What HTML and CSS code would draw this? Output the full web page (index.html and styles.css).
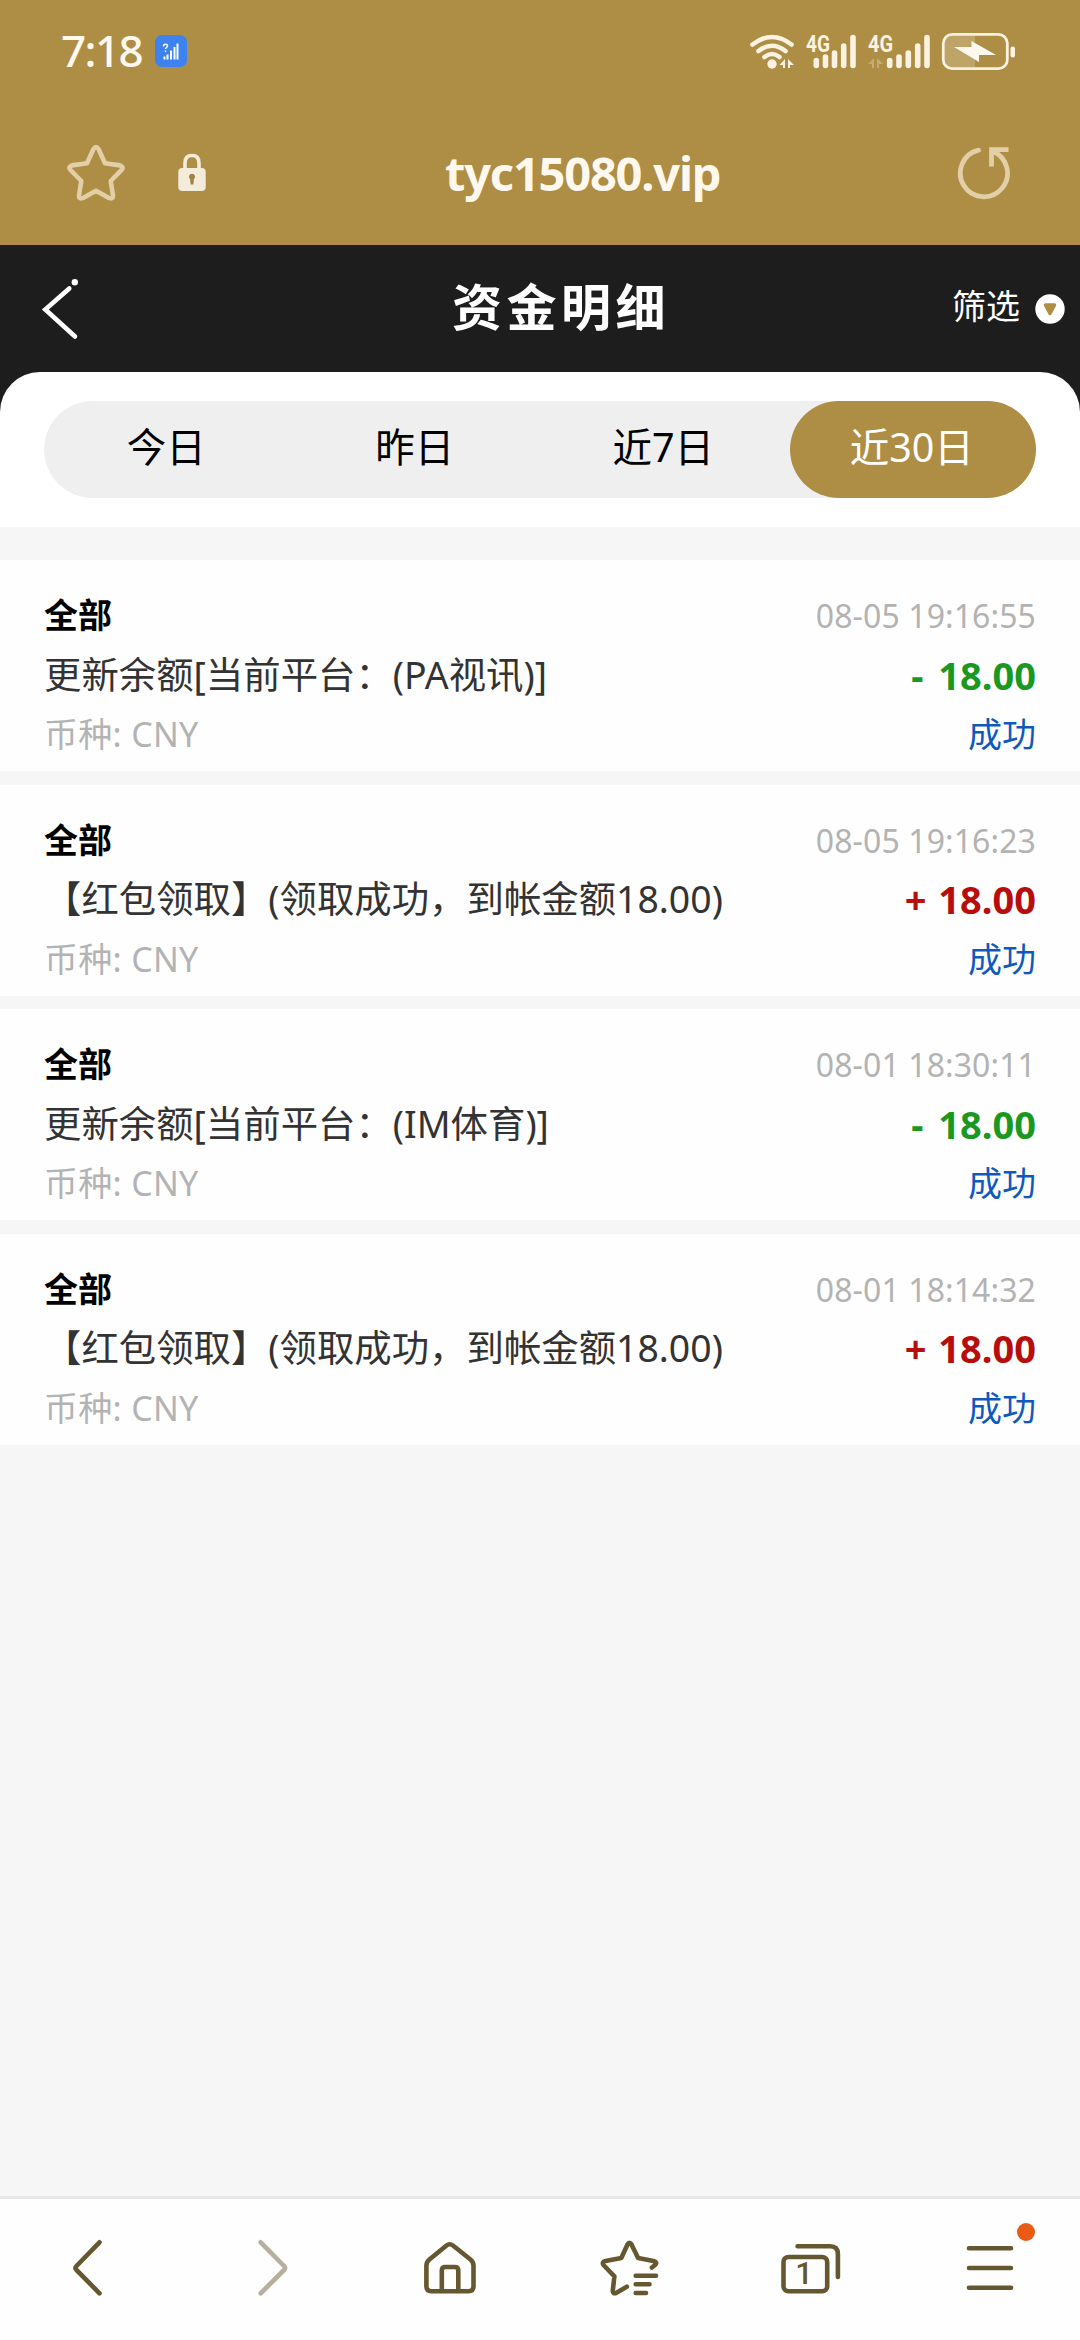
FILE: index.html
```
<!DOCTYPE html>
<html lang="zh-CN">
  <head>
    <meta charset="UTF-8" />
    <meta name="viewport" content="width=device-width, initial-scale=1.0" />
    <title>资金明细</title>
    <link rel="stylesheet" href="styles.css">
  </head>
  <body>
    <header class="browser-top">
      <div class="status-bar">
        <span class="clock">7:18</span>
        <svg class="sim-badge" width="32" height="32" viewBox="0 0 32 32">
          <rect width="32" height="32" rx="7" fill="#3d82ee" />
          <path d="M9.5 24.500v-3M12.500 24.500v-5M16 24.500v-9M19.500 24.500V12M22.500 24.500V8.500" stroke="#fff" stroke-width="2" />
          <path d="M8.500 11.500c0-3 4-3 4-.5 0 1.500-2 1.500-2 3M10.500 15.500v1.500" fill="none" stroke="#fff" stroke-width="1.400" />
        </svg>
        <svg class="status-icons" width="270" height="60" viewBox="748 20 270 60">
          <g fill="none" stroke="#fbf2e2" stroke-width="4.600" stroke-linecap="round">
            <path d="M752.500 43.500q19.500-15 39 0M758.500 50q13.500-10.500 27 0M764.500 56q7.500-6 15 0" />
            <path stroke-width="5.600" d="M816.300 64.500v-5M825.500 64.500v-8.500M834.500 64.500V52M843.700 64.500V45M853 64.500V36.500" />
            <path stroke-width="5.600" d="M889.700 64.500v-5M899 64.500v-8.500M908.300 64.500V52M917.700 64.500V45M927 64.500V36.500" />
          </g>
          <circle cx="772" cy="63" r="4.700" fill="#fbf2e2" />
          <path d="M785 58v9h-2v-3h-3.500zM788 58v9h2v-3h4z" fill="#fbf2e2" />
          <path d="M874 57v10h-2v-4h-4zM877 57v10h2v-4h4z" fill="#fbf2e2" opacity=".3" />
          <text class="net" x="806" y="50.500" textLength="24" lengthAdjust="spacingAndGlyphs">4G</text>
          <text class="net" x="868" y="50.500" textLength="25" lengthAdjust="spacingAndGlyphs">4G</text>
          <path d="M975 34.500h-22q-8 0-8 8v16q0 8 8 8h22z" fill="#bfa468" />
          <rect x="943.300" y="33.300" width="64" height="34.400" rx="9" fill="none" stroke="#fbf2e2" stroke-width="2.800" />
          <path d="M954 46h17.500v-6L996 54h-17v7z" fill="#fff8ef" />
          <rect x="1010.500" y="45.500" width="4.500" height="11" rx="2" fill="#fbf2e2" />
        </svg>
      </div>
      <div class="url-bar">
        <svg width="62" height="62" viewBox="65 142 62 62">
          <path d="M93.500 149Q96 145 98.500 149L105 163.300 120 165.400Q124.500 167 121.500 170L110.700 181 113 195.500Q113 200 108.500 197.700L96 190.800 83.500 197.700Q79 200 79 195.500L81.300 181 70.500 170Q67.500 167 72 165.400L87 163.300Z" fill="none" stroke="#e2cfa8" stroke-width="4.600" stroke-linejoin="round" />
        </svg>
        <svg class="lock" width="30" height="40" viewBox="177 154 30 40">
          <rect x="178.300" y="169" width="27.400" height="23" rx="4" fill="#f3ecda" />
          <path d="M185 170v-6q0-7.500 7-7.500t7 7.500v6" fill="none" stroke="#f3ecda" stroke-width="3.600" />
          <path d="M192 174.800a3 3 0 0 1 2 5.300l-.7 5.400h-2.600l-.7-5.400a3 3 0 0 1 2-5.300z" fill="#a08345" />
        </svg>
        <span class="url">tyc15080.vip</span>
        <svg class="reload" width="56" height="56" viewBox="956 145 56 56">
          <g fill="none" stroke="#e2cfa8" stroke-width="4.800">
            <path d="M978.500 150.200A23.600 23.600 0 1 0 992.500 151.200" stroke-linecap="round" />
            <path d="M1008.500 149.700H991.500V166.500" />
          </g>
        </svg>
      </div>
    </header>

    <div class="page-header">
      <svg class="back" width="40" height="64" viewBox="40 277 40 64">
        <path d="M69.300 288.500L45.300 309.500L75 336.500" fill="none" stroke="#fff" stroke-width="4.600" stroke-linecap="round" />
        <circle cx="74.800" cy="282.300" r="3.200" fill="#fff" />
      </svg>
      <h1>资金明细</h1>
      <div class="filter">
        <span>筛选</span>
        <svg width="30" height="30" viewBox="0 0 30 30">
          <circle cx="15" cy="15" r="14.700" fill="#fff" />
          <path d="M10.500 11h9L15 19.500z" fill="#ae8e44" stroke="#ae8e44" stroke-width="3.500" stroke-linejoin="round" />
        </svg>
      </div>
    </div>

    <div class="tabs-wrap">
      <div class="tabs-panel">
        <div class="tabs">
          <div class="tab">今日</div>
          <div class="tab">昨日</div>
          <div class="tab">近7日</div>
          <div class="tab active">近30日</div>
        </div>
      </div>
    </div>

    <main class="record-list">
      <div class="record">
        <div class="line"><strong>全部</strong><time>08-05 19:16:55</time></div>
        <div class="line"><span class="desc">更新余额[当前平台：(PA视讯)]</span><span class="amount minus">- 18.00</span></div>
        <div class="line"><span class="currency">币种: CNY</span><span class="state">成功</span></div>
      </div>
      <div class="record">
        <div class="line"><strong>全部</strong><time>08-05 19:16:23</time></div>
        <div class="line"><span class="desc">【红包领取】(领取成功，到帐金额18.00)</span><span class="amount plus">+ 18.00</span></div>
        <div class="line"><span class="currency">币种: CNY</span><span class="state">成功</span></div>
      </div>
      <div class="record">
        <div class="line"><strong>全部</strong><time>08-01 18:30:11</time></div>
        <div class="line"><span class="desc">更新余额[当前平台：(IM体育)]</span><span class="amount minus">- 18.00</span></div>
        <div class="line"><span class="currency">币种: CNY</span><span class="state">成功</span></div>
      </div>
      <div class="record">
        <div class="line"><strong>全部</strong><time>08-01 18:14:32</time></div>
        <div class="line"><span class="desc">【红包领取】(领取成功，到帐金额18.00)</span><span class="amount plus">+ 18.00</span></div>
        <div class="line"><span class="currency">币种: CNY</span><span class="state">成功</span></div>
      </div>
    </main>

    <nav class="bottom-nav">
      <svg viewBox="0 0 180 141"><path d="M99.500 43.300L76.500 67Q74.500 69 76.500 71L99.500 94.300" /></svg>
      <svg class="disabled" viewBox="0 0 180 141"><path d="M80.700 43.300L104 67Q106 69 104 71L80.700 94.300" /></svg>
      <svg viewBox="0 0 180 141">
        <path d="M86.500 46.500Q89.700 44 93 46.500L110.500 60.500Q113.500 63 113.500 66.500V87.300Q113.500 92.300 108.500 92.300H71.400Q66.400 92.300 66.400 87.300V66.500Q66.400 63 69.400 60.500Z" />
        <path d="M81.800 92V71.500Q81.800 68 85.300 68H94.800Q98.300 68 98.300 71.500V92" />
      </svg>
      <svg viewBox="0 0 180 141">
        <path d="M86.800 87.700L76.500 93.800Q72.500 95.500 72.800 91.500L74.400 77.300 63.500 66Q61.500 63 65.500 62L81.300 59 87.500 45.500Q89.500 42 91.500 45.500L98.100 59 113.500 62Q118 63.500 115 66L111.900 68.500" />
        <path d="M95.700 76.700H116M95.700 85.300H109.500M95.700 94H106" />
      </svg>
      <svg viewBox="0 0 180 141">
        <rect x="63.500" y="58" width="43.700" height="34.300" rx="5" />
        <path d="M77.600 47.300H110Q117.900 47.300 117.900 55V78" />
        <text class="tab-count" x="84" y="85">1</text>
      </svg>
      <svg viewBox="0 0 180 141">
        <path d="M69 49.300H111M69 69H111M69 88.700H111" />
        <circle class="dot" cx="126" cy="33" r="9" />
      </svg>
    </nav>
  </body>
</html>
```
FILE: styles.css
```
* {
  box-sizing: border-box;
}

body {
  margin: 0;
  width: 1080px;
  height: 2340px;
  display: flex;
  flex-direction: column;
  background-color: #f6f6f6;
  font-family: "Noto Sans", "Noto Sans CJK SC", sans-serif;
  color: #000;
}

svg {
  display: block;
  flex-shrink: 0;
}

/* browser chrome */
.browser-top {
  height: 245px;
  background-color: #ae8e44;
  color: #fff8ef;
}

.status-bar {
  height: 101px;
  padding: 0 62px 0 61px;
  display: flex;
  align-items: center;
}

.clock {
  width: 94px;
  padding-bottom: 2px;
  font-size: 44px;
  font-weight: 500;
  line-height: 60px;
  letter-spacing: -1.6px;
}

.status-icons {
  margin-left: auto;
}

.net {
  font-family: Roboto, sans-serif;
  font-size: 23px;
  font-weight: 700;
  fill: #fbf2e2;
}

.url-bar {
  height: 144px;
  padding: 0 68px 0 65px;
  display: flex;
  align-items: center;
}

.lock {
  margin-left: 50px;
}

.url {
  flex: 1;
  padding-left: 238px;
  font-size: 47px;
  font-weight: 700;
  letter-spacing: -1.2px;
}

/* page title */
.page-header {
  height: 127px;
  padding: 0 15px 0 40px;
  display: grid;
  grid-template-columns: 400px 1fr 300px;
  align-items: center;
  background-color: #1d1d1d;
  color: #fff;
}

h1 {
  margin: 0;
  padding: 0 0 10px 12px;
  font-family: "Noto Sans CJK SC", sans-serif;
  font-size: 50px;
  line-height: 72px;
  letter-spacing: 4.5px;
  white-space: nowrap;
}

.filter {
  display: flex;
  justify-content: flex-end;
  align-items: center;
  gap: 15px;
  font-size: 34px;
  line-height: 50px;
}

.filter span {
  padding-bottom: 6px;
}

/* date range */
.tabs-wrap {
  background-color: #1d1d1d;
}

.tabs-panel {
  padding: 29px 44px;
  border-radius: 40px 40px 0 0;
  background-color: #fff;
}

.tabs {
  display: flex;
  height: 97px;
  border-radius: 49px;
  background-color: #efefef;
}

.tab {
  flex: 1;
  padding-right: 4px;
  border-radius: 49px;
  font-size: 39.5px;
  line-height: 93px;
  text-align: center;
}

.tab.active {
  padding-right: 2px;
  background-color: #ae8e44;
  color: #fff;
}

/* records */
.record-list {
  flex: 1;
  padding-top: 33px;
  display: flex;
  flex-direction: column;
  gap: 13.6px;
}

.record {
  height: 211px;
  padding: 26px 44px 6px;
  background-color: #fefefe;
}

.line {
  display: flex;
  justify-content: space-between;
  height: 59.6px;
  line-height: 59.6px;
  font-size: 34px;
  white-space: nowrap;
}

time {
  font-size: 32px;
  letter-spacing: 0.1px;
  color: #b3b3b3;
}

.desc {
  font-size: 37.4px;
  line-height: 58px;
  color: #333;
}

.amount {
  font-size: 38px;
  font-weight: 700;
  line-height: 58px;
  word-spacing: 2px;
}

.minus {
  color: #1a981f;
  word-spacing: 5px;
}

.plus {
  color: #b80d0d;
}

.currency {
  letter-spacing: 0.3px;
  color: #b3b3b3;
}

.state {
  color: #0f59bd;
}

/* bottom toolbar */
.bottom-nav {
  height: 144px;
  display: flex;
  border-top: 3px solid #e6e6e6;
  background-color: #fefefe;
}

.bottom-nav svg {
  width: 180px;
  height: 141px;
  fill: none;
  stroke: #655730;
  stroke-width: 4.6;
  stroke-linecap: round;
  stroke-linejoin: round;
}

.bottom-nav .disabled {
  stroke: #b6af9e;
}

.bottom-nav .tab-count {
  fill: #655730;
  stroke: none;
  font-family: Roboto, sans-serif;
  font-size: 31px;
  font-weight: 500;
  text-anchor: middle;
}

.bottom-nav .dot {
  fill: #ea5b16;
  stroke: none;
}
```
